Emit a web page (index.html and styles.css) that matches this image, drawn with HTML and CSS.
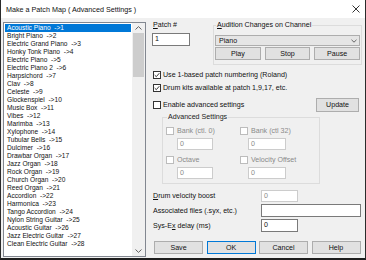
FILE: index.html
```html
<!DOCTYPE html>
<html>
<head>
<meta charset="utf-8">
<link rel="stylesheet" href="styles.css">
</head>
<body>
<div class="window">
  <div class="titlebar">
    <span class="title">Make a Patch Map ( Advanced Settings )</span>
    <svg class="close" width="8" height="8" viewBox="0 0 8 8"><path d="M0.5 0.5 L7.5 7.5 M7.5 0.5 L0.5 7.5" stroke="#000" stroke-width="0.8" fill="none"/></svg>
  </div>
  <div class="body">
    <div class="listbox">
      <ul class="items">
        <li class="sel">Acoustic Piano  -&gt;1</li>
        <li>Bright Piano  -&gt;2</li>
        <li>Electric Grand Piano  -&gt;3</li>
        <li>Honky Tonk Piano  -&gt;4</li>
        <li>Electric Piano  -&gt;5</li>
        <li>Electric Piano 2  -&gt;6</li>
        <li>Harpsichord  -&gt;7</li>
        <li>Clav  -&gt;8</li>
        <li>Celeste  -&gt;9</li>
        <li>Glockenspiel  -&gt;10</li>
        <li>Music Box  -&gt;11</li>
        <li>Vibes  -&gt;12</li>
        <li>Marimba  -&gt;13</li>
        <li>Xylophone  -&gt;14</li>
        <li>Tubular Bells  -&gt;15</li>
        <li>Dulcimer  -&gt;16</li>
        <li>Drawbar Organ  -&gt;17</li>
        <li>Jazz Organ  -&gt;18</li>
        <li>Rock Organ  -&gt;19</li>
        <li>Church Organ  -&gt;20</li>
        <li>Reed Organ  -&gt;21</li>
        <li>Accordion  -&gt;22</li>
        <li>Harmonica  -&gt;23</li>
        <li>Tango Accordion  -&gt;24</li>
        <li>Nylon String Guitar  -&gt;25</li>
        <li>Acoustic Guitar  -&gt;26</li>
        <li>Jazz Electric Guitar  -&gt;27</li>
        <li>Clean Electric Guitar  -&gt;28</li>
      </ul>
      <div class="vscroll">
        <span class="arrow"><svg width="7" height="4" viewBox="0 0 7 4"><path d="M0.5 3.5 L3.5 0.6 L6.5 3.5" stroke="#606060" stroke-width="1" fill="none"/></svg></span>
        <span class="thumb"></span>
        <span class="spacer"></span>
        <span class="arrow"><svg width="7" height="4" viewBox="0 0 7 4"><path d="M0.5 0.5 L3.5 3.4 L6.5 0.5" stroke="#606060" stroke-width="1" fill="none"/></svg></span>
      </div>
    </div>

    <div class="panel">
      <div class="top">
        <div class="patch">
          <span class="lbl"><u>P</u>atch #</span>
          <div class="input">1</div>
        </div>
        <fieldset class="group audition">
          <legend><u>A</u>udition Changes on Channel</legend>
          <div class="combo"><span>Piano</span><svg width="6" height="4" viewBox="0 0 6 4"><path d="M0.5 0.8 L3 3.2 L5.5 0.8" stroke="#555" stroke-width="0.9" fill="none"/></svg></div>
          <div class="btnrow">
            <div class="btn">Play</div>
            <div class="btn">Stop</div>
            <div class="btn">Pause</div>
          </div>
        </fieldset>
      </div>

      <div class="check row1"><span class="cb"><svg width="6" height="6" viewBox="0 0 6 6"><path d="M0.7 3.1 L2.3 4.7 L5.3 1.2" stroke="#222" stroke-width="0.9" fill="none"/></svg></span><span>Use 1-based patch numbering (Roland)</span></div>
      <div class="check row2"><span class="cb"><svg width="6" height="6" viewBox="0 0 6 6"><path d="M0.7 3.1 L2.3 4.7 L5.3 1.2" stroke="#222" stroke-width="0.9" fill="none"/></svg></span><span>Drum kits available at patch 1,9,17, etc.</span></div>
      <div class="row3">
        <div class="check"><span class="cb"></span><span>Enable advanced settings</span></div>
        <div class="btn update">Update</div>
      </div>

      <fieldset class="group advanced">
        <legend>Advanced Settings</legend>
        <div class="adv-grid">
          <div class="col col1">
            <div class="check"><span class="cb dis"></span><span class="dis-text">Bank (ctl. 0)</span></div>
            <div class="input dis">0</div>
            <div class="check second"><span class="cb dis"></span><span class="dis-text">Octave</span></div>
            <div class="input dis">0</div>
          </div>
          <div class="col col2">
            <div class="check"><span class="cb dis"></span><span class="dis-text">Bank (ctl 32)</span></div>
            <div class="input dis">0</div>
            <div class="check second"><span class="cb dis"></span><span class="dis-text">Velocity Offset</span></div>
            <div class="input dis">0</div>
          </div>
        </div>
      </fieldset>

      <div class="frow f1"><span class="flbl"><u>D</u>rum velocity boost</span><div class="input dis short">0</div></div>
      <div class="frow f2"><span class="flbl">Associated files (.syx, etc.)</span><div class="input long"></div></div>
      <div class="frow f3"><span class="flbl">Sys-E<u>x</u> delay (ms)</span><div class="input short">0</div></div>

      <div class="actions">
        <div class="btn">Save</div>
        <div class="btn ok">OK</div>
        <div class="btn">Cancel</div>
        <div class="btn">Help</div>
      </div>
    </div>
  </div>
</div>
</body>
</html>
```

FILE: styles.css
```css
* { box-sizing: border-box; }
html, body { margin: 0; padding: 0; }
body {
  font-family: "Liberation Sans", Arial, sans-serif;
  font-size: 7.1px;
  color: #111;
  background: #fff;
}
u { text-decoration: underline; text-underline-offset: 1px; }

.window {
  width: 366px;
  height: 260px;
  background: #f0f0f0;
  border-left: 1px solid #2b2b2b;
  border-right: 1px solid #2b2b2b;
  border-bottom: 2px solid #1e1e1e;
  display: flex;
  flex-direction: column;
  overflow: hidden;
}

.titlebar {
  height: 18px;
  flex: none;
  background: #fff;
  display: flex;
  align-items: center;
  justify-content: space-between;
  padding: 0 5px 0 5px;
}
.title { font-size: 7.2px; }
.close { display: block; }

.body {
  flex: 1;
  display: flex;
  padding: 3px 0 0 2px;
}

/* list box */
.listbox {
  width: 143px;
  height: 235px;
  margin-top: 1px;
  border: 1px solid #828790;
  background: #fff;
  display: flex;
  flex: none;
}
.items {
  list-style: none;
  margin: 0;
  padding: 1px 1px 0 1px;
  flex: 1;
  font-size: 6.6px;
  overflow: hidden;
}
.items li {
  height: 8px;
  line-height: 8px;
  padding-left: 2px;
  white-space: pre;
}
.items li.sel { background: #0078d7; color: #fff; }

.vscroll {
  width: 13px;
  flex: none;
  background: #f0f0f0;
  display: flex;
  flex-direction: column;
  align-items: center;
}
.vscroll .arrow {
  height: 10px;
  display: flex;
  align-items: center;
  justify-content: center;
}
.vscroll .arrow svg { display: block; }
.vscroll .thumb {
  width: 11px;
  height: 44px;
  background: #cdcdcd;
}
.vscroll .spacer { flex: 1; }

/* right panel */
.panel {
  flex: 1;
  margin-left: 6px;
  padding-right: 3px;
  display: flex;
  flex-direction: column;
}

.top { display: flex; height: 44px; }
.patch { width: 38px; flex: none; }
.patch .lbl { display: block; height: 8px; line-height: 8px; margin-left: 1px; }
.patch .input { margin-top: 4px; width: 38px; }

.input {
  height: 13px;
  border: 1px solid #7a7a7a;
  background: #fff;
  line-height: 11px;
  padding-left: 2px;
}
.input.dis { border-color: #cccccc; color: #8a8a8a; height: 12px; line-height: 10px; }

fieldset.group {
  margin: 0;
  border: 1px solid #dcdcdc;
  min-width: 0;
}
fieldset.group legend {
  padding: 0 1px;
  margin-left: 1px;
  line-height: 8px;
  height: 8px;
}

.audition {
  margin-left: 23px !important;
  width: 149px;
  padding: 6px 1px 4px 1px;
}
.combo {
  height: 11px;
  border: 1px solid #adadad;
  background: #e5e5e5;
  display: flex;
  align-items: center;
  justify-content: space-between;
  padding: 0 2px 0 3px;
}
.combo svg { display: block; }
.btnrow { display: flex; gap: 4px; margin-top: 1px; }

.btn {
  height: 13px;
  border: 1px solid #adadad;
  background: #e1e1e1;
  display: flex;
  align-items: center;
  justify-content: center;
}
.btnrow .btn { flex: 1; }

.check {
  display: flex;
  align-items: center;
  height: 9px;
  white-space: nowrap;
}
.cb {
  width: 8px;
  height: 8px;
  flex: none;
  border: 1px solid #333;
  background: #fff;
  margin-left: 1px;
  margin-right: 2px;
  display: flex;
  align-items: center;
  justify-content: center;
}
.cb svg { display: block; }
.cb.dis { border-color: #bcbcbc; }
.dis-text { color: #8a8a8a; }

.row1 { margin-top: 5px; }
.row2 { margin-top: 4px; }
.row3 {
  margin-top: 6px;
  height: 14px;
  display: flex;
  align-items: center;
  justify-content: space-between;
}
.update { width: 43px; height: 14px; margin-right: 3px; }

.advanced {
  margin: 1px 0 0 10px !important;
  width: 158px;
  padding: 5px 3px 4px 3px;
}
.advanced legend { margin-left: 1px; color: #222; }
.adv-grid {
  display: grid;
  grid-template-columns: 74px 1fr;
}
.col { display: flex; flex-direction: column; }
.col .input { margin-top: 3px; }
.col .check.second { margin-top: 5px; }
.col .check .cb { margin-left: 0; margin-right: 3px; }
.col1 .input { margin-left: 11px; width: 36px; }
.col2 .input { margin-left: 8px; width: 38px; }

.frow { display: flex; align-items: center; }
.flbl { width: 109px; padding-left: 1px; flex: none; white-space: nowrap; }
.f1 { margin-top: 6px; height: 12px; }
.f2 { margin-top: 2px; height: 13px; }
.f3 { margin-top: 2px; height: 13px; }
.input.short { width: 37px; }
.input.long { width: 100px; }

.actions {
  display: flex;
  gap: 3.5px;
  margin-top: 9px;
  margin-left: 2px;
}
.actions .btn { width: 49px; flex: none; }
.actions .ok { border-color: #0078d7; }
```
